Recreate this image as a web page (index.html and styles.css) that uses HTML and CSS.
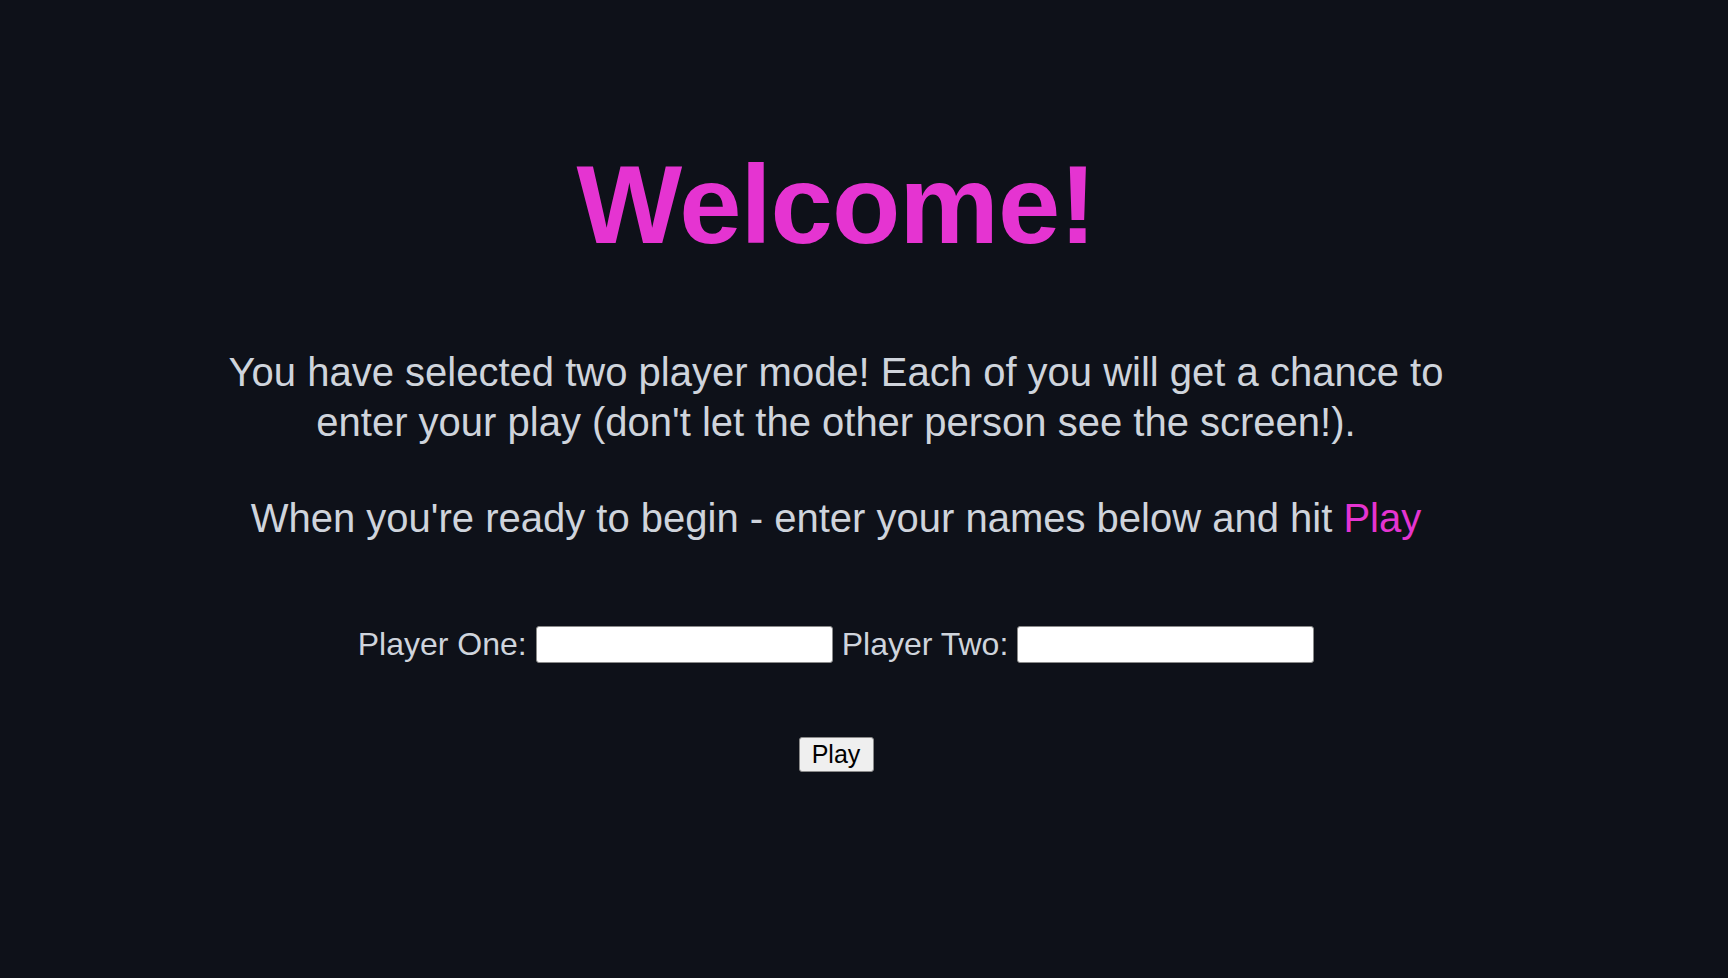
FILE: index.html
```html
<!DOCTYPE html>
<html lang="en">
<head>
<meta charset="utf-8">
<title>Welcome</title>
<link rel="stylesheet" href="styles.css">
</head>
<body>
<main class="page">
  <h1 class="title">Welcome!</h1>
  <p class="intro">You have selected two player mode! Each of you will get a chance to<br>enter your play (don't let the other person see the screen!).</p>
  <p class="ready">When you're ready to begin - enter your names below and hit <span class="accent">Play</span></p>
  <form class="players">
    <label class="player-label" for="p1">Player One:</label>
    <input class="player-input" id="p1" type="text">
    <label class="player-label" for="p2">Player Two:</label>
    <input class="player-input" id="p2" type="text">
  </form>
  <div class="actions">
    <button class="play-btn" type="button">Play</button>
  </div>
</main>
</body>
</html>
```

FILE: styles.css
```css
html, body {
  margin: 0;
  padding: 0;
  background: #0e1119;
}

body {
  height: 978px;
  font-family: "Liberation Sans", Arial, Helvetica, sans-serif;
  color: #cfd4dc;
}

.page {
  width: 1672px;
  display: flex;
  flex-direction: column;
  align-items: center;
  text-align: center;
}

.title {
  margin: 141px 0 0;
  font-size: 112px;
  line-height: 128px;
  font-weight: bold;
  letter-spacing: -1px;
  color: #e534d1;
}

.intro {
  margin: 78px 0 0;
  font-size: 40px;
  line-height: 50px;
}

.ready {
  margin: 46px 0 0;
  font-size: 40px;
  line-height: 50px;
}

.accent {
  color: #e534d1;
}

.players {
  margin: 83px 0 0;
  display: flex;
  align-items: center;
  justify-content: center;
  gap: 9px;
}

.player-label {
  font-size: 32px;
  line-height: 37px;
  color: #cfd4dc;
}

.player-input {
  box-sizing: border-box;
  width: 297px;
  height: 37px;
  margin: 0;
  padding: 0 6px;
  background: #ffffff;
  border: 1px solid #8a8a8a;
  border-radius: 3px;
  font-family: "Liberation Sans", Arial, sans-serif;
  font-size: 20px;
}

.actions {
  margin: 74px 0 0;
  display: flex;
  justify-content: center;
}

.play-btn {
  box-sizing: border-box;
  height: 35px;
  width: 75px;
  padding: 0;
  margin: 0;
  background: #efefef;
  color: #000000;
  border: 1px solid #8a8a8a;
  border-radius: 3px;
  font-family: "Liberation Sans", Arial, sans-serif;
  font-size: 25px;
  line-height: 33px;
}
```
